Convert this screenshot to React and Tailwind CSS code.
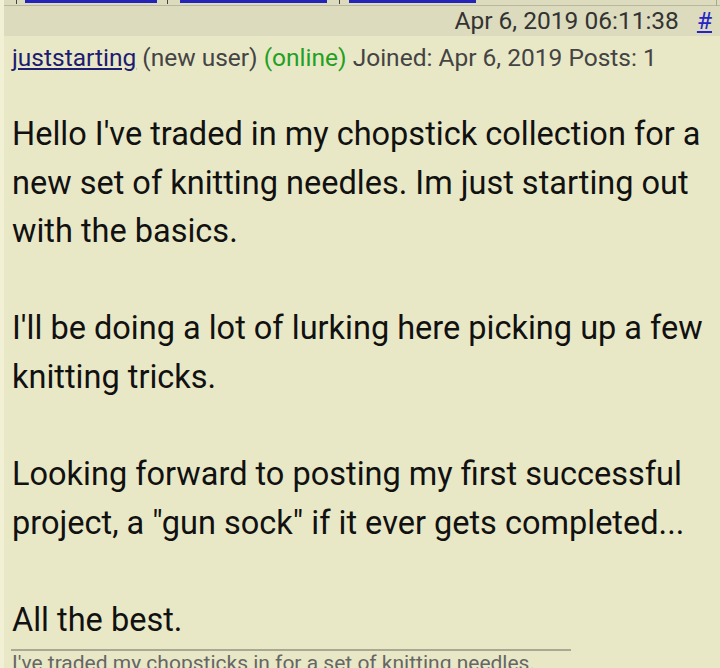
export default function App() {
  return (
    <div className="h-[668px] w-[720px] overflow-hidden bg-[#f1f0d5] pl-[4px] font-['Roboto',sans-serif]">
      <div className="h-full bg-[#e9e8c6]">
        {/* cut-off nav row */}
        <div className="flex h-[6px] items-start border-b border-[#b9b89e] bg-[#dcdbbd] pl-[12px]">
          <span className="h-[4px] w-px bg-[#444]"></span>
          <span className="ml-[8px] h-[3px] w-[132px] bg-[#2424b8]"></span>
          <span className="ml-[10px] h-[4px] w-px bg-[#444]"></span>
          <span className="ml-[12px] h-[3px] w-[147px] bg-[#2424b8]"></span>
          <span className="ml-[12px] h-[4px] w-px bg-[#444]"></span>
          <span className="ml-[9px] h-[3px] w-[127px] bg-[#2424b8]"></span>
          <span className="ml-auto mr-[3px] h-[6px] w-px bg-[#a9a890]"></span>
        </div>

        {/* post header */}
        <div className="flex h-[30px] items-center justify-end bg-[#dcdbbd] pr-[8px] text-[24.5px] text-[#333]">
          <span>Apr 6, 2019 06:11:38</span>
          <a href="#" className="ml-[18px] text-[#2424c8] underline">#</a>
        </div>

        {/* user line */}
        <div className="px-[8px] pt-[5px] text-[24.5px] leading-[34px] text-[#444]">
          <a href="#" className="text-[#1c1c70] underline">juststarting</a>{' '}
          (new user) <span className="text-[#22a022]">(online)</span> Joined: Apr 6, 2019 Posts: 1
        </div>

        {/* post body */}
        <div className="px-[8px] pt-[35px] text-[32.5px] leading-[48.6px] text-[#111]">
          Hello I've traded in my chopstick collection for a new set of knitting needles. Im just starting out with the basics.
          <br />
          <br />
          I'll be doing a lot of lurking here picking up a few knitting tricks.
          <br />
          <br />
          Looking forward to posting my first successful project, a "gun sock" if it ever gets completed...
          <br />
          <br />
          All the best.
        </div>

        {/* signature */}
        <div className="ml-[7px] mt-[4px] w-[560px] border-t-2 border-[#a8a893]"></div>
        <div className="px-[8px] text-[21px] leading-[24px] text-[#666]">
          I've traded my chopsticks in for a set of knitting needles.
        </div>
      </div>
    </div>
  )
}
